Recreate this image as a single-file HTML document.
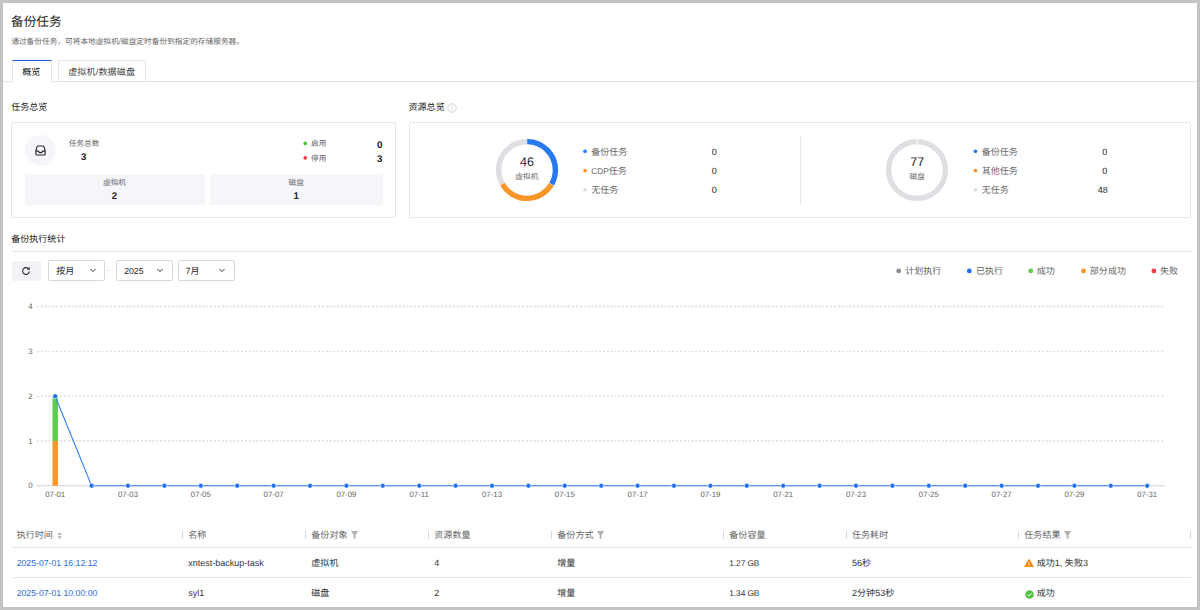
<!DOCTYPE html>
<html lang="zh-CN">
<head>
<meta charset="utf-8">
<title>备份任务</title>
<style>
*{box-sizing:border-box;margin:0;padding:0}
html,body{width:1200px;height:610px;overflow:hidden;background:#fff}
body{text-rendering:geometricPrecision;font-family:"Liberation Sans",sans-serif;color:#222;position:relative;font-size:9.05px;line-height:1}
.frame{position:absolute;left:0;top:0;width:1200px;height:610px;border:3px solid #c3c3c3;pointer-events:none;z-index:50}
.a{position:absolute;white-space:nowrap}
.t{position:absolute;white-space:nowrap;line-height:12px;height:12px}
.g{color:#666}
.s{font-size:7.7px}
.b{font-weight:bold}
.c{transform:translateX(-50%)}
.r{transform:translateX(-100%)}
.dot{position:absolute;border-radius:50%}
.hl{position:absolute;height:1px;background:#e4e5e9}
.card{position:absolute;border:1px solid #e6e7eb;background:#fff;border-radius:2px}
.sub{position:absolute;background:#f5f6fa}
.sel{position:absolute;border:1px solid #d7d8dc;border-radius:1.5px;background:#fff;height:20.5px;top:260.4px}
.sep{position:absolute;width:1px;height:8px;top:530.5px;background:#d8d9dd}
</style>
</head>
<body>
<!-- header -->
<div class="t" style="left:11px;top:15.4px;font-size:12.7px;line-height:15px;height:15px;color:#222">备份任务</div>
<div class="t g s" style="left:11.2px;top:35.7px">通过备份任务，可将本地虚拟机/磁盘定时备份到指定的存储服务器。</div>

<!-- tabs -->
<div class="hl" style="left:3px;top:81px;width:1194px;background:#e1e2e6"></div>
<div class="a" style="left:11.5px;top:60px;width:40px;height:22px;background:#fff;border:1px solid #e4e5e9;border-bottom:none;border-top:1.5px solid #1d5ddc"></div>
<div class="t c" style="left:31.3px;top:66px;color:#111;font-weight:500">概览</div>
<div class="a" style="left:58px;top:60px;width:87.5px;height:21px;background:#fff;border:1px solid #e4e5e9;border-bottom:none"></div>
<div class="t c" style="left:101.7px;top:66px;color:#444;letter-spacing:0.15px">虚拟机/数据磁盘</div>

<!-- section titles -->
<div class="t" style="left:11.2px;top:101px;color:#222;font-weight:500">任务总览</div>
<div class="t" style="left:408.5px;top:101px;color:#222;font-weight:500">资源总览</div>
<svg class="a" style="left:447.4px;top:102.5px" width="10" height="10" viewBox="0 0 10 10"><circle cx="5" cy="5" r="4.15" fill="none" stroke="#c3c5cb" stroke-width="0.8"/><rect x="4.6" y="4.4" width="0.8" height="2.7" fill="#b9bbc1"/><rect x="4.6" y="2.9" width="0.8" height="0.9" fill="#b9bbc1"/></svg>

<!-- card 1 -->
<div class="card" style="left:11px;top:122px;width:385px;height:96px"></div>
<div class="card" style="left:409px;top:122px;width:782px;height:96px"></div>
<svg class="a" style="left:0;top:0" width="1200" height="610" viewBox="0 0 1200 610">
<circle cx="40.30" cy="150.30" r="15.30" fill="#f5f6fa"/>
<circle cx="305.25" cy="143.45" r="1.85" fill="#52c443"/>
<circle cx="305.25" cy="157.85" r="1.85" fill="#f03a3e"/>
<circle cx="585.05" cy="151.25" r="1.85" fill="#2878f0"/>
<circle cx="585.05" cy="170.55" r="1.85" fill="#fa9628"/>
<circle cx="585.05" cy="189.75" r="1.85" fill="#dcdde1"/>
<circle cx="975.45" cy="151.25" r="1.85" fill="#2878f0"/>
<circle cx="975.45" cy="170.55" r="1.85" fill="#fa9628"/>
<circle cx="975.45" cy="189.75" r="1.85" fill="#dcdde1"/>
<circle cx="898.70" cy="270.90" r="2.40" fill="#8c8c8c"/>
<circle cx="969.30" cy="270.90" r="2.40" fill="#1f6ff0"/>
<circle cx="1030.70" cy="270.90" r="2.40" fill="#5ccc4a"/>
<circle cx="1083.50" cy="270.90" r="2.40" fill="#fa9628"/>
<circle cx="1153.90" cy="270.90" r="2.40" fill="#f23c43"/>
</svg>
<svg class="a" style="left:34.6px;top:145.4px" width="11" height="11" viewBox="0 0 11 11"><path d="M3.2 1 H7.8 Q8.6 1 9 1.9 L10.1 5.2 V9.2 Q10.1 10 9.3 10 H1.7 Q0.9 10 0.9 9.2 V5.2 L2 1.9 Q2.4 1 3.2 1 Z" fill="none" stroke="#2b2b2b" stroke-width="1.15"/><path d="M0.9 6.2 H3.4 L4.4 7.6 H6.6 L7.6 6.2 H10.1" fill="none" stroke="#2b2b2b" stroke-width="1.25"/></svg>
<div class="t g s" style="left:68.7px;top:138.2px">任务总数</div>
<div class="t b c" style="left:83.7px;top:152.4px;font-size:9.7px">3</div>
<div class="t g s" style="left:311.1px;top:138.1px">启用</div>
<div class="t b r" style="left:382.5px;top:139.7px;font-size:9.7px">0</div>
<div class="t g s" style="left:311.1px;top:152.5px">停用</div>
<div class="t b r" style="left:382.5px;top:154.1px;font-size:9.7px">3</div>
<div class="sub" style="left:25px;top:173.7px;width:180px;height:31.5px"></div>
<div class="sub" style="left:210px;top:173.7px;width:172.5px;height:31.5px"></div>
<div class="t g s c" style="left:114.5px;top:177px">虚拟机</div>
<div class="t b c" style="left:114.5px;top:191px;font-size:9.7px">2</div>
<div class="t g s c" style="left:296.2px;top:177px">磁盘</div>
<div class="t b c" style="left:296.2px;top:191px;font-size:9.7px">1</div>

<!-- card 2 -->
<div class="a" style="left:799.5px;top:135.5px;width:1px;height:68.5px;background:#e6e7eb"></div>
<svg class="a" style="left:490.05px;top:132.8px" width="74" height="74" viewBox="-37 -37 74 74">
 <g fill="none" stroke-width="5.4" transform="rotate(-90)">
  <circle r="28.4" stroke="#dedfe3" stroke-dasharray="59.1 119.34" stroke-dashoffset="-119.16"/>
  <circle r="28.4" stroke="#2878f0" stroke-dasharray="59.1 179.07" stroke-dashoffset="-0.2"/>
  <circle r="28.4" stroke="#fa9628" stroke-dasharray="59.1 179.07" stroke-dashoffset="-59.68"/>
 </g>
</svg>
<div class="t c" style="left:526.9px;top:154.7px;font-size:12.5px;line-height:14px;height:14px;color:#222">46</div>
<div class="t g s c" style="left:526.9px;top:170.8px">虚拟机</div>

<div class="t g" style="left:591.2px;top:145.9px">备份任务</div>
<div class="t c" style="left:714.2px;top:145.9px">0</div>
<div class="t g" style="left:591.2px;top:164.9px"><span style="font-size:8.3px">CDP</span>任务</div>
<div class="t c" style="left:714.2px;top:164.9px">0</div>
<div class="t g" style="left:591.2px;top:184px">无任务</div>
<div class="t c" style="left:714.2px;top:184px">0</div>

<svg class="a" style="left:880.3px;top:133.1px" width="74" height="74" viewBox="-37 -37 74 74">
 <g fill="none" stroke-width="5.4" transform="rotate(-90)">
  <circle r="28.4" stroke="#dedfe3"/>
 </g>
 <rect x="-0.4" y="-32" width="0.8" height="7" fill="#fff"/>
</svg>
<div class="t c" style="left:917.3px;top:154.7px;font-size:12.5px;line-height:14px;height:14px;color:#222">77</div>
<div class="t g s c" style="left:917.3px;top:170.8px">磁盘</div>

<div class="t g" style="left:981.7px;top:145.9px">备份任务</div>
<div class="t c" style="left:1104.7px;top:145.9px">0</div>
<div class="t g" style="left:981.7px;top:164.9px">其他任务</div>
<div class="t c" style="left:1104.7px;top:164.9px">0</div>
<div class="t g" style="left:981.7px;top:184px">无任务</div>
<div class="t c" style="left:1102.7px;top:184px">48</div>

<!-- stats section -->
<div class="t" style="left:11.2px;top:232.5px;color:#222;font-weight:500">备份执行统计</div>
<div class="hl" style="left:11.5px;top:251px;width:1179px"></div>

<!-- controls -->
<div class="a" style="left:11.5px;top:260.7px;width:29.3px;height:20.3px;background:#f2f3f7;border-radius:1px"></div>
<svg class="a" style="left:21px;top:266.2px" width="10" height="10" viewBox="0 0 10 10"><path d="M7.9 3.2 A3.4 3.4 0 1 0 8.4 5.4" fill="none" stroke="#333" stroke-width="1.1"/><path d="M8.8 0.9 V3.8 H5.9 Z" fill="#333"/></svg>
<div class="sel" style="left:48.2px;width:56.6px"></div>
<div class="t" style="left:56.2px;top:265.3px;color:#222">按月</div>
<svg class="a" style="left:89.7px;top:268.3px" width="6" height="5" viewBox="0 0 6 5"><path d="M0.4 0.9 L3 3.6 L5.6 0.9" fill="none" stroke="#333" stroke-width="0.95"/></svg>
<div class="a" style="left:107px;top:270px;width:2.6px;height:1px;background:#dcdde0"></div>
<div class="sel" style="left:116px;width:56.6px"></div>
<div class="t" style="left:124.2px;top:265.3px;color:#222;font-size:8.7px">2025</div>
<svg class="a" style="left:157.3px;top:268.3px" width="6" height="5" viewBox="0 0 6 5"><path d="M0.4 0.9 L3 3.6 L5.6 0.9" fill="none" stroke="#333" stroke-width="0.95"/></svg>
<div class="sel" style="left:178px;width:57px"></div>
<div class="t" style="left:185.5px;top:265.3px;color:#222">7月</div>
<svg class="a" style="left:218.8px;top:268.3px" width="6" height="5" viewBox="0 0 6 5"><path d="M0.4 0.9 L3 3.6 L5.6 0.9" fill="none" stroke="#333" stroke-width="0.95"/></svg>

<!-- chart legend -->
<div class="t g" style="left:905.2px;top:265.2px">计划执行</div>
<div class="t g" style="left:975.9px;top:265.2px">已执行</div>
<div class="t g" style="left:1036.7px;top:265.2px">成功</div>
<div class="t g" style="left:1089.8px;top:265.2px">部分成功</div>
<div class="t g" style="left:1159.9px;top:265.2px">失败</div>

<!-- chart -->
<svg class="a" style="left:0;top:290px" width="1200" height="215" viewBox="0 290 1200 215">
<line x1="37" x2="1165" y1="441.0" y2="441.0" stroke="#dddee3" stroke-width="1.5" stroke-dasharray="1.95 1.9"/>
<line x1="37" x2="1165" y1="396.2" y2="396.2" stroke="#dddee3" stroke-width="1.5" stroke-dasharray="1.95 1.9"/>
<line x1="37" x2="1165" y1="351.4" y2="351.4" stroke="#dddee3" stroke-width="1.5" stroke-dasharray="1.95 1.9"/>
<line x1="37" x2="1165" y1="306.6" y2="306.6" stroke="#dddee3" stroke-width="1.5" stroke-dasharray="1.95 1.9"/>
<line x1="37" x2="1165" y1="485.8" y2="485.8" stroke="#d0d1d5" stroke-width="1"/>
<rect x="52.5" y="441.0" width="5.4" height="44.8" fill="#fa9628"/>
<rect x="52.5" y="396.2" width="5.4" height="44.8" fill="#5ccc4a"/>
<polyline fill="none" stroke="#3380f2" stroke-width="1.1" points="55.2,396.2 91.6,485.8 128.0,485.8 164.4,485.8 200.8,485.8 237.2,485.8 273.6,485.8 310.0,485.8 346.4,485.8 382.8,485.8 419.2,485.8 455.6,485.8 492.0,485.8 528.4,485.8 564.8,485.8 601.2,485.8 637.6,485.8 674.0,485.8 710.4,485.8 746.8,485.8 783.2,485.8 819.6,485.8 856.0,485.8 892.4,485.8 928.8,485.8 965.2,485.8 1001.6,485.8 1038.0,485.8 1074.4,485.8 1110.8,485.8 1147.2,485.8"/>
<circle cx="55.2" cy="396.2" r="2.45" fill="#1f6ff0" stroke="#fff" stroke-width="0.6"/>
<circle cx="91.6" cy="485.8" r="2.45" fill="#1f6ff0" stroke="#fff" stroke-width="0.6"/>
<circle cx="128.0" cy="485.8" r="2.45" fill="#1f6ff0" stroke="#fff" stroke-width="0.6"/>
<circle cx="164.4" cy="485.8" r="2.45" fill="#1f6ff0" stroke="#fff" stroke-width="0.6"/>
<circle cx="200.8" cy="485.8" r="2.45" fill="#1f6ff0" stroke="#fff" stroke-width="0.6"/>
<circle cx="237.2" cy="485.8" r="2.45" fill="#1f6ff0" stroke="#fff" stroke-width="0.6"/>
<circle cx="273.6" cy="485.8" r="2.45" fill="#1f6ff0" stroke="#fff" stroke-width="0.6"/>
<circle cx="310.0" cy="485.8" r="2.45" fill="#1f6ff0" stroke="#fff" stroke-width="0.6"/>
<circle cx="346.4" cy="485.8" r="2.45" fill="#1f6ff0" stroke="#fff" stroke-width="0.6"/>
<circle cx="382.8" cy="485.8" r="2.45" fill="#1f6ff0" stroke="#fff" stroke-width="0.6"/>
<circle cx="419.2" cy="485.8" r="2.45" fill="#1f6ff0" stroke="#fff" stroke-width="0.6"/>
<circle cx="455.6" cy="485.8" r="2.45" fill="#1f6ff0" stroke="#fff" stroke-width="0.6"/>
<circle cx="492.0" cy="485.8" r="2.45" fill="#1f6ff0" stroke="#fff" stroke-width="0.6"/>
<circle cx="528.4" cy="485.8" r="2.45" fill="#1f6ff0" stroke="#fff" stroke-width="0.6"/>
<circle cx="564.8" cy="485.8" r="2.45" fill="#1f6ff0" stroke="#fff" stroke-width="0.6"/>
<circle cx="601.2" cy="485.8" r="2.45" fill="#1f6ff0" stroke="#fff" stroke-width="0.6"/>
<circle cx="637.6" cy="485.8" r="2.45" fill="#1f6ff0" stroke="#fff" stroke-width="0.6"/>
<circle cx="674.0" cy="485.8" r="2.45" fill="#1f6ff0" stroke="#fff" stroke-width="0.6"/>
<circle cx="710.4" cy="485.8" r="2.45" fill="#1f6ff0" stroke="#fff" stroke-width="0.6"/>
<circle cx="746.8" cy="485.8" r="2.45" fill="#1f6ff0" stroke="#fff" stroke-width="0.6"/>
<circle cx="783.2" cy="485.8" r="2.45" fill="#1f6ff0" stroke="#fff" stroke-width="0.6"/>
<circle cx="819.6" cy="485.8" r="2.45" fill="#1f6ff0" stroke="#fff" stroke-width="0.6"/>
<circle cx="856.0" cy="485.8" r="2.45" fill="#1f6ff0" stroke="#fff" stroke-width="0.6"/>
<circle cx="892.4" cy="485.8" r="2.45" fill="#1f6ff0" stroke="#fff" stroke-width="0.6"/>
<circle cx="928.8" cy="485.8" r="2.45" fill="#1f6ff0" stroke="#fff" stroke-width="0.6"/>
<circle cx="965.2" cy="485.8" r="2.45" fill="#1f6ff0" stroke="#fff" stroke-width="0.6"/>
<circle cx="1001.6" cy="485.8" r="2.45" fill="#1f6ff0" stroke="#fff" stroke-width="0.6"/>
<circle cx="1038.0" cy="485.8" r="2.45" fill="#1f6ff0" stroke="#fff" stroke-width="0.6"/>
<circle cx="1074.4" cy="485.8" r="2.45" fill="#1f6ff0" stroke="#fff" stroke-width="0.6"/>
<circle cx="1110.8" cy="485.8" r="2.45" fill="#1f6ff0" stroke="#fff" stroke-width="0.6"/>
<circle cx="1147.2" cy="485.8" r="2.45" fill="#1f6ff0" stroke="#fff" stroke-width="0.6"/>
</svg>
<div class="t g s r" style="left:32.7px;top:480.3px;font-size:7.9px">0</div>
<div class="t g s r" style="left:32.7px;top:435.5px;font-size:7.9px">1</div>
<div class="t g s r" style="left:32.7px;top:390.7px;font-size:7.9px">2</div>
<div class="t g s r" style="left:32.7px;top:345.9px;font-size:7.9px">3</div>
<div class="t g s r" style="left:32.7px;top:301.1px;font-size:7.9px">4</div>
<div class="t g s c" style="left:55.2px;top:489px;font-size:7.8px">07-01</div>
<div class="t g s c" style="left:128.0px;top:489px;font-size:7.8px">07-03</div>
<div class="t g s c" style="left:200.8px;top:489px;font-size:7.8px">07-05</div>
<div class="t g s c" style="left:273.6px;top:489px;font-size:7.8px">07-07</div>
<div class="t g s c" style="left:346.4px;top:489px;font-size:7.8px">07-09</div>
<div class="t g s c" style="left:419.2px;top:489px;font-size:7.8px">07-11</div>
<div class="t g s c" style="left:492.0px;top:489px;font-size:7.8px">07-13</div>
<div class="t g s c" style="left:564.8px;top:489px;font-size:7.8px">07-15</div>
<div class="t g s c" style="left:637.6px;top:489px;font-size:7.8px">07-17</div>
<div class="t g s c" style="left:710.4px;top:489px;font-size:7.8px">07-19</div>
<div class="t g s c" style="left:783.2px;top:489px;font-size:7.8px">07-21</div>
<div class="t g s c" style="left:856.0px;top:489px;font-size:7.8px">07-23</div>
<div class="t g s c" style="left:928.8px;top:489px;font-size:7.8px">07-25</div>
<div class="t g s c" style="left:1001.6px;top:489px;font-size:7.8px">07-27</div>
<div class="t g s c" style="left:1074.4px;top:489px;font-size:7.8px">07-29</div>
<div class="t g s c" style="left:1147.2px;top:489px;font-size:7.8px">07-31</div>
<!-- table -->
<div class="sep" style="left:181.8px"></div>
<div class="sep" style="left:304.8px"></div>
<div class="sep" style="left:427.8px"></div>
<div class="sep" style="left:550.8px"></div>
<div class="sep" style="left:722.8px"></div>
<div class="sep" style="left:845.5px"></div>
<div class="sep" style="left:1017.8px"></div>
<div class="sep" style="left:1189.5px"></div>
<div class="t g" style="left:16.7px;top:529.2px">执行时间</div>
<div class="t g" style="left:188.3px;top:529.2px">名称</div>
<div class="t g" style="left:311.3px;top:529.2px">备份对象</div>
<div class="t g" style="left:434.3px;top:529.2px">资源数量</div>
<div class="t g" style="left:557.3px;top:529.2px">备份方式</div>
<div class="t g" style="left:729.3px;top:529.2px">备份容量</div>
<div class="t g" style="left:852px;top:529.2px">任务耗时</div>
<div class="t g" style="left:1024.3px;top:529.2px">任务结果</div>
<svg class="a" style="left:57.1px;top:531.7px" width="5.4" height="7.2" viewBox="0 0 5.4 7.2"><path d="M2.7 0.2 L5.2 3 H0.2 Z M2.7 7 L5.2 4.2 H0.2 Z" fill="#b6b7bc"/></svg>
<svg class="a" style="left:351.1px;top:531.1px" width="7.2" height="7.8" viewBox="0 0 7.2 7.8"><path d="M0 0 H7.2 L4.5 4.2 V7.8 H2.7 V4.2 Z" fill="#b0b1b6"/></svg>
<svg class="a" style="left:596.8px;top:531.1px" width="7.2" height="7.8" viewBox="0 0 7.2 7.8"><path d="M0 0 H7.2 L4.5 4.2 V7.8 H2.7 V4.2 Z" fill="#b0b1b6"/></svg>
<svg class="a" style="left:1063.8px;top:531.1px" width="7.2" height="7.8" viewBox="0 0 7.2 7.8"><path d="M0 0 H7.2 L4.5 4.2 V7.8 H2.7 V4.2 Z" fill="#b0b1b6"/></svg>
<div class="hl" style="left:11.5px;top:547px;width:1179px"></div>
<div class="hl" style="left:11.5px;top:577px;width:1179px"></div>
<div class="t" style="left:16.7px;top:556.7px;color:#2a6bd6;font-size:8.7px">2025-07-01 16:12:12</div>
<div class="t" style="left:188.3px;top:556.7px;color:#333;font-size:9px">xntest-backup-task</div>
<div class="t" style="left:311.3px;top:556.7px;color:#333">虚拟机</div>
<div class="t" style="left:434.3px;top:556.7px;color:#333">4</div>
<div class="t" style="left:557.3px;top:556.7px;color:#333">增量</div>
<div class="t" style="left:729.3px;top:556.7px;color:#333;font-size:8.4px;letter-spacing:-0.1px">1.27 GB</div>
<div class="t" style="left:852px;top:556.7px;color:#333">56秒</div>
<div class="t" style="left:1036.7px;top:556.7px;color:#333">成功1, 失败3</div>
<div class="t" style="left:16.7px;top:586.9px;color:#2a6bd6;font-size:8.7px">2025-07-01 10:00:00</div>
<div class="t" style="left:188.3px;top:586.9px;color:#333;font-size:9px">syl1</div>
<div class="t" style="left:311.3px;top:586.9px;color:#333">磁盘</div>
<div class="t" style="left:434.3px;top:586.9px;color:#333">2</div>
<div class="t" style="left:557.3px;top:586.9px;color:#333">增量</div>
<div class="t" style="left:729.3px;top:586.9px;color:#333;font-size:8.4px;letter-spacing:-0.1px">1.34 GB</div>
<div class="t" style="left:852px;top:586.9px;color:#333">2分钟53秒</div>
<div class="t" style="left:1036.7px;top:586.9px;color:#333">成功</div>
<svg class="a" style="left:1023.9px;top:558.8px" width="10" height="8.6" viewBox="0 0 10 8.6"><path d="M5 1 L9 7.6 H1 Z" fill="#fa8c16" stroke="#fa8c16" stroke-width="1.6" stroke-linejoin="round"/><rect x="4.6" y="3" width="0.8" height="2.4" fill="#fff"/><rect x="4.6" y="6.1" width="0.8" height="0.8" fill="#fff"/></svg>
<svg class="a" style="left:1024.6px;top:589.9px" width="9" height="9" viewBox="0 0 9 9"><circle cx="4.5" cy="4.5" r="4.25" fill="#52c443"/><path d="M2.5 4.6 L3.9 6 L6.5 3.3" fill="none" stroke="#fff" stroke-width="1"/></svg>

<div class="frame"></div>
</body>
</html>
